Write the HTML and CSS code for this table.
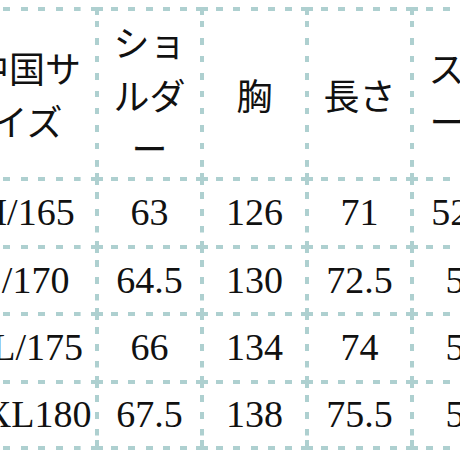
FILE: index.html
```html
<!DOCTYPE html>
<html lang="ja">
<head>
<meta charset="utf-8">
<title>サイズ表</title>
<link rel="stylesheet" href="styles.css">
</head>
<body>
<div class="viewport">
  <div class="size-table">
    <div class="cell head first">中国サイズ</div>
    <div class="cell head">ショルダー</div>
    <div class="cell head">胸</div>
    <div class="cell head">長さ</div>
    <div class="cell head">スリーブ</div>

    <div class="cell first">M/165</div>
    <div class="cell">63</div>
    <div class="cell">126</div>
    <div class="cell">71</div>
    <div class="cell">52.5</div>

    <div class="cell first">L/170</div>
    <div class="cell">64.5</div>
    <div class="cell">130</div>
    <div class="cell">72.5</div>
    <div class="cell">54</div>

    <div class="cell first">XL/175</div>
    <div class="cell">66</div>
    <div class="cell">134</div>
    <div class="cell">74</div>
    <div class="cell">55</div>

    <div class="cell first last">XXL180</div>
    <div class="cell last">67.5</div>
    <div class="cell last">138</div>
    <div class="cell last">75.5</div>
    <div class="cell last">56</div>
  </div>
</div>
</body>
</html>
```
FILE: styles.css
```css
html, body {
  margin: 0;
  padding: 0;
  background: #ffffff;
}

body {
  width: 460px;
  height: 460px;
  overflow: hidden;
}

.viewport {
  --line: #aed0d0;
  margin-top: 7px;
  width: 460px;
  height: 453px;
  overflow: hidden;
}

.size-table {
  display: grid;
  grid-template-columns: 140px repeat(4, 105px);
  grid-template-rows: 170px 68px 67px 68px 70px;
  width: max-content;
  margin-left: -45px;
  font-family: "Liberation Serif", "Noto Sans CJK JP", serif;
  color: #111111;
}

.cell {
  --hx: 16px;
  --hp: 17.3px;
  --hw: 76.2px;
  --vy: 15px;
  --vp: 17px;
  --vh: 40.5px;
  --bh: 0px;
  position: relative;
  display: flex;
  align-items: center;
  justify-content: center;
  text-align: center;
  white-space: nowrap;
  padding: 4px 6px 0 10px;
  font-size: 38px;
  line-height: 1.2;
  background-image:
    repeating-linear-gradient(90deg, var(--line) 0 7px, transparent 7px var(--hp)),
    repeating-linear-gradient(90deg, var(--line) 0 7px, transparent 7px var(--hp)),
    repeating-linear-gradient(180deg, var(--line) 0 6.5px, transparent 6.5px var(--vp));
  background-repeat: no-repeat;
  background-position: var(--hx) 0, var(--hx) 100%, 0 var(--vy);
  background-size: var(--hw) 4px, var(--hw) var(--bh), 4px var(--vh);
}

.cell::before {
  content: "";
  position: absolute;
  left: -4px;
  top: -4px;
  width: 12px;
  height: 12px;
  background:
    linear-gradient(var(--line), var(--line)) center / 12px 4px no-repeat,
    linear-gradient(var(--line), var(--line)) center / 4px 12px no-repeat;
}

.cell.first {
  --hx: 13.3px;
  --hp: 17.6px;
  --hw: 112.6px;
  padding-right: 12px;
}

.cell.head {
  --vy: 13.5px;
  --vp: 17.4px;
  --vh: 145.9px;
  white-space: normal;
  font-family: "Noto Sans CJK JP", "Liberation Serif", sans-serif;
  font-size: 36px;
  line-height: 53px;
  line-break: loose;
  word-break: normal;
}

.cell.head.first {
  padding-right: 6px;
}

.cell.last {
  --bh: 4px;
  padding-bottom: 4px;
}

.cell.last::after {
  content: "";
  position: absolute;
  left: -4px;
  bottom: 0;
  width: 12px;
  height: 10px;
  background:
    linear-gradient(var(--line), var(--line)) bottom / 12px 4px no-repeat,
    linear-gradient(var(--line), var(--line)) top / 4px 10px no-repeat;
}
```
